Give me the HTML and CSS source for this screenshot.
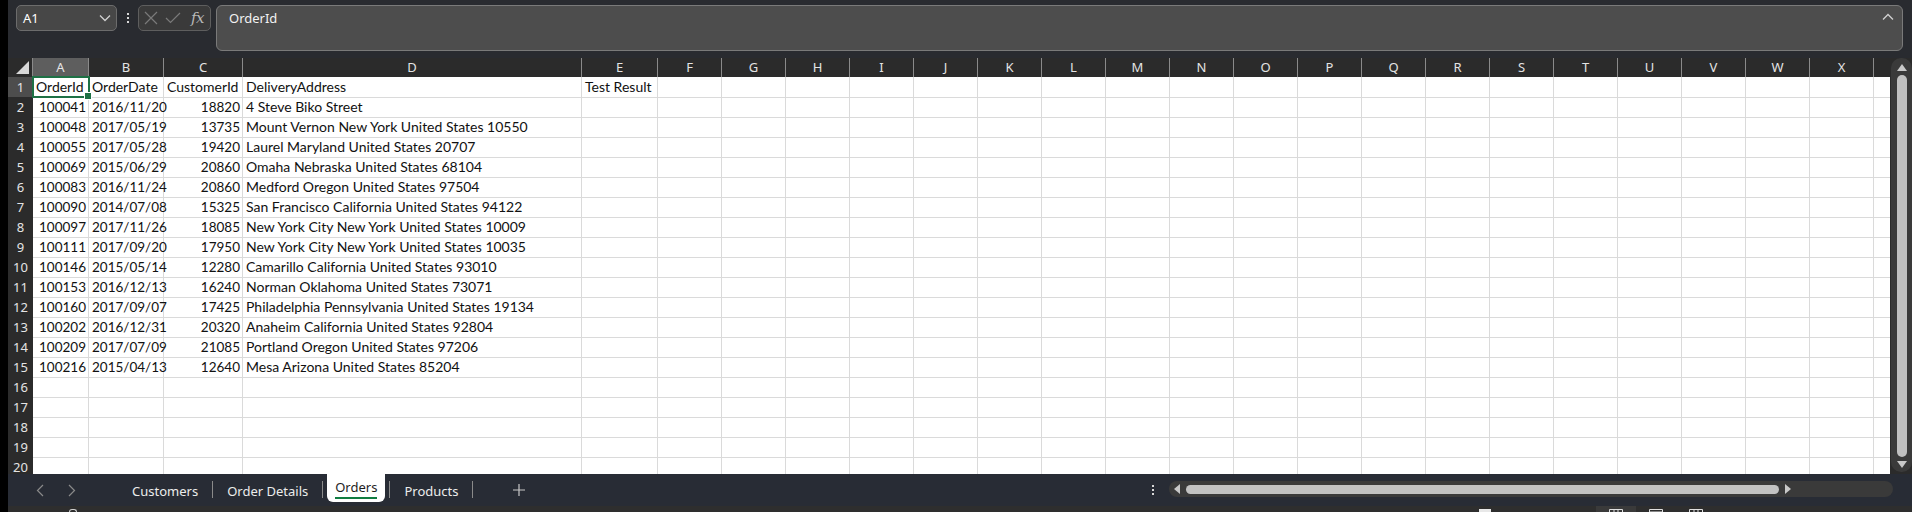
FILE: index.html
```html
<!DOCTYPE html>
<html>
<head>
<meta charset="utf-8">
<link rel="stylesheet" href="styles.css">
</head>
<body>
<div class="app">
  <div class="topbar">
    <div class="namebox"><span>A1</span>
      <svg width="12" height="8" viewBox="0 0 12 8"><path d="M1 1.5 L6 6.5 L11 1.5" fill="none" stroke="#d0d0d0" stroke-width="1.3"/></svg>
    </div>
    <div class="vdots"><i></i><i></i><i></i></div>
    <div class="fxbox">
      <svg width="14" height="14" viewBox="0 0 14 14"><path d="M1 1 L13 13 M13 1 L1 13" stroke="#7a7a7a" stroke-width="1.2"/></svg>
      <svg width="16" height="12" viewBox="0 0 16 12"><path d="M1 6 L5.5 10.5 L15 1" fill="none" stroke="#7a7a7a" stroke-width="1.2"/></svg>
      <span class="fx">fx</span>
    </div>
    <div class="formula"><span class="ftext">OrderId</span>
      <svg class="caret" width="12" height="8" viewBox="0 0 12 8"><path d="M1 6.5 L6 1.5 L11 6.5" fill="none" stroke="#d0d0d0" stroke-width="1.3"/></svg>
    </div>
  </div>

  <div class="sheetarea">
    <div class="grid">
      <div class="hrow">
        <div class="corner"><svg width="13" height="13" viewBox="0 0 13 13"><path d="M13 0 L13 13 L0 13 Z" fill="#d8d8d8"/></svg></div>
        <div class="ch sel">A</div><div class="ch">B</div><div class="ch">C</div><div class="ch">D</div><div class="ch">E</div>
        <div class="ch">F</div><div class="ch">G</div><div class="ch">H</div><div class="ch">I</div><div class="ch">J</div>
        <div class="ch">K</div><div class="ch">L</div><div class="ch">M</div><div class="ch">N</div><div class="ch">O</div>
        <div class="ch">P</div><div class="ch">Q</div><div class="ch">R</div><div class="ch">S</div><div class="ch">T</div>
        <div class="ch">U</div><div class="ch">V</div><div class="ch">W</div><div class="ch">X</div><div class="ch last"></div>
      </div>
      <div class="row"><div class="rh sel">1</div><div class="c active">OrderId</div><div class="c">OrderDate</div><div class="c">CustomerId</div><div class="c">DeliveryAddress</div><div class="c">Test Result</div><div class="rest"></div></div>
      <div class="row"><div class="rh">2</div><div class="c n">100041</div><div class="c n">2016/11/20</div><div class="c n">18820</div><div class="c">4 Steve Biko Street</div><div class="c"></div><div class="rest"></div></div>
      <div class="row"><div class="rh">3</div><div class="c n">100048</div><div class="c n">2017/05/19</div><div class="c n">13735</div><div class="c">Mount Vernon New York United States 10550</div><div class="c"></div><div class="rest"></div></div>
      <div class="row"><div class="rh">4</div><div class="c n">100055</div><div class="c n">2017/05/28</div><div class="c n">19420</div><div class="c">Laurel Maryland United States 20707</div><div class="c"></div><div class="rest"></div></div>
      <div class="row"><div class="rh">5</div><div class="c n">100069</div><div class="c n">2015/06/29</div><div class="c n">20860</div><div class="c">Omaha Nebraska United States 68104</div><div class="c"></div><div class="rest"></div></div>
      <div class="row"><div class="rh">6</div><div class="c n">100083</div><div class="c n">2016/11/24</div><div class="c n">20860</div><div class="c">Medford Oregon United States 97504</div><div class="c"></div><div class="rest"></div></div>
      <div class="row"><div class="rh">7</div><div class="c n">100090</div><div class="c n">2014/07/08</div><div class="c n">15325</div><div class="c">San Francisco California United States 94122</div><div class="c"></div><div class="rest"></div></div>
      <div class="row"><div class="rh">8</div><div class="c n">100097</div><div class="c n">2017/11/26</div><div class="c n">18085</div><div class="c">New York City New York United States 10009</div><div class="c"></div><div class="rest"></div></div>
      <div class="row"><div class="rh">9</div><div class="c n">100111</div><div class="c n">2017/09/20</div><div class="c n">17950</div><div class="c">New York City New York United States 10035</div><div class="c"></div><div class="rest"></div></div>
      <div class="row"><div class="rh">10</div><div class="c n">100146</div><div class="c n">2015/05/14</div><div class="c n">12280</div><div class="c">Camarillo California United States 93010</div><div class="c"></div><div class="rest"></div></div>
      <div class="row"><div class="rh">11</div><div class="c n">100153</div><div class="c n">2016/12/13</div><div class="c n">16240</div><div class="c">Norman Oklahoma United States 73071</div><div class="c"></div><div class="rest"></div></div>
      <div class="row"><div class="rh">12</div><div class="c n">100160</div><div class="c n">2017/09/07</div><div class="c n">17425</div><div class="c">Philadelphia Pennsylvania United States 19134</div><div class="c"></div><div class="rest"></div></div>
      <div class="row"><div class="rh">13</div><div class="c n">100202</div><div class="c n">2016/12/31</div><div class="c n">20320</div><div class="c">Anaheim California United States 92804</div><div class="c"></div><div class="rest"></div></div>
      <div class="row"><div class="rh">14</div><div class="c n">100209</div><div class="c n">2017/07/09</div><div class="c n">21085</div><div class="c">Portland Oregon United States 97206</div><div class="c"></div><div class="rest"></div></div>
      <div class="row"><div class="rh">15</div><div class="c n">100216</div><div class="c n">2015/04/13</div><div class="c n">12640</div><div class="c">Mesa Arizona United States 85204</div><div class="c"></div><div class="rest"></div></div>
      <div class="row"><div class="rh">16</div><div class="c"></div><div class="c"></div><div class="c"></div><div class="c"></div><div class="c"></div><div class="rest"></div></div>
      <div class="row"><div class="rh">17</div><div class="c"></div><div class="c"></div><div class="c"></div><div class="c"></div><div class="c"></div><div class="rest"></div></div>
      <div class="row"><div class="rh">18</div><div class="c"></div><div class="c"></div><div class="c"></div><div class="c"></div><div class="c"></div><div class="rest"></div></div>
      <div class="row"><div class="rh">19</div><div class="c"></div><div class="c"></div><div class="c"></div><div class="c"></div><div class="c"></div><div class="rest"></div></div>
      <div class="row"><div class="rh">20</div><div class="c"></div><div class="c"></div><div class="c"></div><div class="c"></div><div class="c"></div><div class="rest"></div></div>
    </div>
    <div class="vscroll">
      <div class="vtrack">
        <svg class="varrow" width="10" height="7" viewBox="0 0 10 7"><path d="M5 0 L10 7 L0 7 Z" fill="#c8c8c8"/></svg>
        <div class="vthumb"></div>
        <svg class="varrow" width="10" height="7" viewBox="0 0 10 7"><path d="M0 0 L10 0 L5 7 Z" fill="#c8c8c8"/></svg>
      </div>
    </div>
  </div>

  <div class="tabbar">
    <div class="nav">
      <svg width="8" height="13" viewBox="0 0 8 13"><path d="M7 1 L1.5 6.5 L7 12" fill="none" stroke="#8a8a8a" stroke-width="1.2"/></svg>
      <svg width="8" height="13" viewBox="0 0 8 13"><path d="M1 1 L6.5 6.5 L1 12" fill="none" stroke="#8a8a8a" stroke-width="1.2"/></svg>
    </div>
    <div class="tab">Customers</div>
    <div class="sep"></div>
    <div class="tab">Order Details</div>
    <div class="sep"></div>
    <div class="tab on"><span>Orders</span></div>
    <div class="sep"></div>
    <div class="tab">Products</div>
    <div class="sep"></div>
    <div class="plus"><svg width="12" height="12" viewBox="0 0 12 12"><path d="M6 0 V12 M0 6 H12" stroke="#c8c8c8" stroke-width="1.2"/></svg></div>
    <div class="spacer"></div>
    <div class="hdots"><i></i><i></i><i></i></div>
    <div class="htrack">
      <svg width="6" height="10" viewBox="0 0 6 10"><path d="M6 0 L6 10 L0 5 Z" fill="#c8c8c8"/></svg>
      <div class="hthumb"></div>
      <svg width="6" height="10" viewBox="0 0 6 10"><path d="M0 0 L6 5 L0 10 Z" fill="#c8c8c8"/></svg>
    </div>
  </div>

  <div class="status">
    <div class="st-left"></div>
    <div class="st-spacer"></div>
    <div class="st-mark"></div>
    <div class="st-views">
      <div class="view cur"><svg width="14" height="6" viewBox="0 0 14 6"><path d="M0.5 6 V0.5 H13.5 V6 M5 0.5 V6 M9 0.5 V6" fill="none" stroke="#e0e0e0" stroke-width="1"/></svg></div>
      <div class="view"><svg width="14" height="6" viewBox="0 0 14 6"><path d="M0.5 6 V0.5 H13.5 V6 M0.5 3 H13.5" fill="none" stroke="#e0e0e0" stroke-width="1"/></svg></div>
      <div class="view"><svg width="14" height="6" viewBox="0 0 14 6"><path d="M0.5 6 V0.5 H13.5 V6 M5 0.5 V6 M9 0.5 V6" fill="none" stroke="#e0e0e0" stroke-width="1"/></svg></div>
    </div>
  </div>
</div>
</body>
</html>
```

FILE: styles.css
```css
* { box-sizing: border-box; }
html, body { margin: 0; padding: 0; }
body {
  background: #000;
  width: 1912px;
  height: 512px;
  overflow: hidden;
  font-family: "Noto Sans", "Open Sans", sans-serif;
}
.app {
  margin-left: 8px;
  width: 1904px;
  height: 512px;
  display: flex;
  flex-direction: column;
  background: #292b30;
}

/* top bar */
.topbar {
  height: 58px;
  flex: none;
  display: flex;
  align-items: flex-start;
  padding: 5px 9px 0 8px;
}
.namebox {
  width: 101px;
  height: 26px;
  background: #474747;
  border: 1px solid #6c6c6c;
  border-radius: 5px;
  display: flex;
  align-items: center;
  justify-content: space-between;
  padding: 0 5px 0 6px;
  color: #fff;
  font-size: 13px;
}
.vdots {
  width: 21px;
  height: 26px;
  display: flex;
  flex-direction: column;
  align-items: center;
  justify-content: center;
  gap: 2px;
}
.vdots i, .hdots i {
  display: block;
  width: 2px;
  height: 2px;
  background: #d8d8d8;
}
.fxbox {
  width: 73px;
  height: 26px;
  background: #3a3a3a;
  border: 1px solid #5e5e5e;
  border-radius: 5px;
  display: flex;
  align-items: center;
  padding: 0 0 0 5px;
  gap: 7px;
}
.fx {
  font-family: "DejaVu Serif", "Liberation Serif", serif;
  font-style: italic;
  font-size: 15px;
  color: #b8b8b8;
  margin-left: 3px;
  letter-spacing: -0.5px;
}
.formula {
  flex: 1;
  margin-left: 5px;
  height: 46px;
  background: #4d4d4d;
  border: 1px solid #7a7a7a;
  border-radius: 6px;
  display: flex;
  justify-content: space-between;
  align-items: flex-start;
  padding: 2px 8px 0 12px;
}
.ftext {
  color: #f2f2f2;
  font-size: 13px;
  line-height: 20px;
}
.caret { margin-top: 5px; }

/* sheet */
.sheetarea {
  height: 416px;
  flex: none;
  display: flex;
  overflow: hidden;
}
.grid {
  width: 1882px;
  background: #fff;
  overflow: hidden;
}
.hrow, .row {
  display: grid;
  grid-template-columns: 25px 56px 75px 79px 339px 76px 1232px;
}
.hrow {
  grid-template-columns: 25px 56px 75px 79px 339px 76px repeat(19, 64px) 16px;
  height: 19px;
  background: #2b2b2b;
}
.corner {
  display: flex;
  align-items: flex-end;
  justify-content: flex-end;
  padding: 0 3px 3px 0;
  border-right: 1px solid #8a8a8a;
}
.ch {
  color: #e4e4e4;
  font-size: 13px;
  line-height: 19px;
  text-align: center;
  border-right: 1px solid #8a8a8a;
}
.ch.sel { background: #5e5e5e; }
.ch.last { border-right: none; }
.row { height: 20px; }
.rh {
  background: #2b2b2b;
  color: #e4e4e4;
  font-size: 13px;
  line-height: 20px;
  text-align: center;
  border-bottom: 1px solid #8c8c8c;
}
.rh.sel { background: #4d4d4d; }
.c {
  position: relative;
  border-right: 1px solid #dadada;
  border-bottom: 1px solid #dadada;
  font-family: "Lato", "Liberation Sans", sans-serif;
  font-size: 14px;
  line-height: 20px;
  color: #111;
  padding: 0 3px;
  white-space: nowrap;
  overflow: visible;
}
.c.n {
  text-align: right;
  padding-right: 2px;
  font-size: 13.5px;
}
.c.active::after {
  content: "";
  position: absolute;
  left: -1px;
  top: -1px;
  right: -2px;
  bottom: -1px;
  border: 2px solid #1e7145;
}
.c.active::before {
  content: "";
  position: absolute;
  right: -4px;
  bottom: -3px;
  width: 6px;
  height: 6px;
  background: #1e7145;
  border: 1px solid #fff;
  z-index: 2;
}
.rest {
  border-bottom: 1px solid #dadada;
  background: repeating-linear-gradient(to right, transparent 0 63px, #dadada 63px 64px);
}

/* vertical scroll */
.vscroll {
  width: 22px;
  background: #2b2b2b;
  padding: 0 0 2px 1px;
}
.vtrack {
  height: 100%;
  background: #3a3a3a;
  border-radius: 10px;
  display: flex;
  flex-direction: column;
  align-items: center;
  padding: 6px 0 4px;
  gap: 4px;
}
.vthumb {
  flex: 1;
  width: 10px;
  background: #c0c0c0;
  border-radius: 5px;
}
.varrow { flex: none; }

/* tab bar */
.tabbar {
  height: 32px;
  flex: none;
  background: #282c35;
  display: flex;
  align-items: stretch;
  color: #ececec;
  font-size: 13px;
  padding-right: 19px;
}
.nav {
  width: 110px;
  display: flex;
  align-items: center;
  gap: 24px;
  padding-left: 28px;
}
.tab {
  padding: 0 14px;
  display: flex;
  align-items: center;
  padding-top: 1px;
  white-space: nowrap;
}
.tab.on {
  background: #fff;
  color: #1d1d1d;
  height: 28px;
  margin: 0 4px;
  padding: 0 8px;
  border-radius: 0 0 6px 6px;
  align-items: flex-start;
}
.tab.on span {
  display: block;
  line-height: 19px;
  padding-top: 4px;
  border-bottom: 2px solid #107c41;
}
.sep {
  width: 1px;
  background: #8a8a8a;
  margin: 7px 0 8px;
}
.plus {
  display: flex;
  align-items: center;
  padding-left: 40px;
}
.spacer { flex: 1; }
.hdots {
  width: 17px;
  display: flex;
  flex-direction: column;
  align-items: flex-start;
  justify-content: center;
  gap: 2px;
}
.htrack {
  width: 724px;
  margin: 7px 0 9px;
  background: #3a3a3a;
  border-radius: 8px;
  display: flex;
  align-items: center;
  padding: 0 5px;
  gap: 6px;
}
.hthumb {
  width: 593px;
  height: 9px;
  background: #c2c2c2;
  border-radius: 5px;
}

/* status bar */
.status {
  height: 6px;
  flex: none;
  background: #2e2e2e;
  display: flex;
  overflow: hidden;
}
.st-left {
  width: 8px;
  height: 3px;
  margin-left: 61px;
  margin-top: 3px;
  border: 1px solid #d0d0d0;
  border-bottom: none;
  border-radius: 4px 4px 0 0;
}
.st-spacer { flex: 1; }
.st-mark {
  width: 12px;
  height: 3px;
  margin-top: 3px;
  background: #e8e8e8;
  margin-right: 105px;
}
.st-views {
  display: flex;
  margin-right: 196px;
}
.view {
  width: 40px;
  display: flex;
  justify-content: center;
  padding-top: 3px;
}
.view.cur { background: #3a3a3a; }
```
